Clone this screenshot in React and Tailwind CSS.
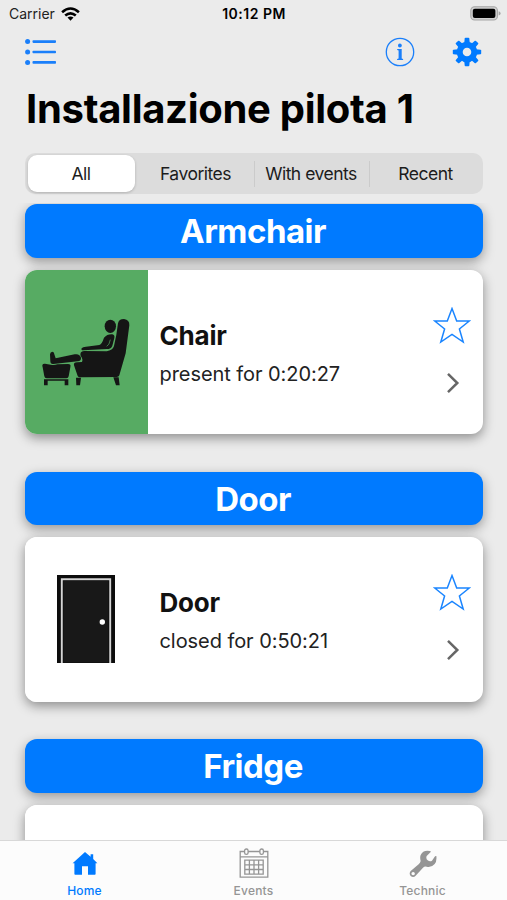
import React, { useState } from 'react';

const filters = ['All', 'Favorites', 'With events', 'Recent'];

const ListIcon = () => (
  <svg width="32" height="26" viewBox="0 0 32 26" fill="#1a7ffa">
    {[2.6, 13, 23.4].map((y) => (
      <g key={y}>
        <circle cx="2.6" cy={y} r="2.5" />
        <rect x="7.5" y={y - 1.3} width="23.5" height="2.6" rx="0.8" />
      </g>
    ))}
  </svg>
);

const InfoIcon = () => (
  <svg width="30" height="30" viewBox="0 0 30 30" fill="#1a7ffa">
    <circle cx="15" cy="15" r="13.7" fill="none" stroke="#1a7ffa" strokeWidth="1.3" />
    <circle cx="14.9" cy="8.5" r="1.9" />
    <path d="M12.2 12.1h4.5v9.5l1.4.4v1h-6v-1l1.5-.4v-8.1l-1.4-.4z" />
  </svg>
);

const GearIcon = () => (
  <svg width="30" height="30" viewBox="0 0 30 30" fill="none">
    <circle cx="15" cy="15" r="7.3" stroke="#007aff" strokeWidth="6" />
    {[0, 45, 90, 135, 180, 225, 270, 315].map((angle) => (
      <path
        key={angle}
        d="M12.2 6 12.7 1.5Q12.8.8 13.5.8h3q.7 0 .8.7L17.8 6z"
        fill="#007aff"
        transform={`rotate(${angle} 15 15)`}
      />
    ))}
  </svg>
);

const WifiIcon = () => (
  <svg width="19" height="14" viewBox="0 0 19 14" fill="none" stroke="#000" strokeWidth="2.6">
    <path d="M1.1 5.2Q9.5-2.2 17.9 5.2" />
    <path d="M4.2 8.6Q9.5 4 14.8 8.6" />
    <path d="M9.5 13.7 6.5 10.6Q9.5 8.2 12.5 10.6z" fill="#000" stroke="none" />
  </svg>
);

const BatteryIcon = () => (
  <svg width="31" height="15" viewBox="0 0 31 15">
    <rect x="0.8" y="0.8" width="26.6" height="13.2" rx="3.8" fill="#d0d0d0" stroke="#a5a5a5" strokeWidth="1.1" />
    <rect x="2.8" y="2.8" width="22.6" height="9.2" rx="2" fill="#000" />
    <path d="M28.6 5.2q2 .6 2 2.2t-2 2.2z" fill="#a5a5a5" />
  </svg>
);

const ArmchairIcon = () => (
  <svg width="90" height="68" viewBox="65 54 270 204" fill="#151515">
    <ellipse cx="273" cy="79" rx="17" ry="20" />
    <path d="M296 70Q298 57 314 57Q331 59 330 76L319 160 300 226Q298 232 290 231L184 232Q175 232 174 225L164 196Q162 187 173 187L188 186Q192 178 184 168Q180 155 194 153L262 154Q280 151 284 138Q292 105 296 70Z" />
    <path d="M254 113Q264 102 279 103Q287 105 285 114L279 137Q276 147 262 147L192 151Q184 151 187 145Q190 141 200 140L240 135Q248 132 254 113Z" />
    <path d="M262 139Q270 136 273 119" fill="none" stroke="#57ab63" strokeWidth="2" />
    <path d="M92 163Q93 155 99 155Q105 156 105 163L109 175 166 163Q181 160 185 173Q186 183 175 184L102 192Q93 193 93 183Z" />
    <path d="M70 202Q66 190 77 191L94 194Q104 197 114 193L146 192Q156 192 153 202L148 229Q147 235 141 235H82Q76 235 75 229Z" />
    <path d="M74 238H147V256H136V242H85V256H74Z" />
    <path d="M170 233H185L182 256H171ZM282 232H298L301 256H290Z" />
  </svg>
);

const DoorIcon = () => (
  <svg width="58" height="88" viewBox="0 0 58 88">
    <rect width="58" height="88" fill="#0c0c0c" />
    <path d="M4.8 88V4.2H53.2V88" fill="none" stroke="#d4d4d4" strokeWidth="1.9" />
    <rect x="6.5" y="5.8" width="45" height="81.7" fill="#181818" />
    <circle cx="45.3" cy="47" r="2.7" fill="#fff" />
  </svg>
);

const StarIcon = () => (
  <svg width="38" height="37" viewBox="0 0 38 37" fill="none" stroke="#1a85ff" strokeWidth="1.5">
    <path d="M19 1.6 23.7 14H36.3L26.4 22 30.2 35 19 27.5 7.8 35 11.6 22 1.7 14H14.3Z" />
  </svg>
);

const ChevronIcon = () => (
  <svg width="14" height="22" viewBox="0 0 14 22" fill="none" stroke="#666" strokeWidth="2.5">
    <path d="M2 1.8 11.3 11 2 20.2" />
  </svg>
);

const HomeIcon = () => (
  <svg width="26" height="25" viewBox="0 0 26 25" fill="#007aff">
    <path d="M13 .9 18.6 5.7V3.2H21.2V8.1L25.4 12.2H23.6V23Q23.6 23.8 22.8 23.8H16V15.2H10V23.8H3.2Q2.4 23.8 2.4 23V12.2H.6Z" />
  </svg>
);

const CalendarIcon = () => (
  <svg width="30" height="31" viewBox="0 0 30 31" fill="none" stroke="#959595" strokeWidth="1.3">
    <path d="M5.6 3.5H1.2V29.2H28.8V3.5H24.4M9.1 3.5H20.9M1.2 8.9H28.8" />
    <rect x="5.6" y="1" width="3.5" height="5.4" rx="1.7" />
    <rect x="20.9" y="1" width="3.5" height="5.4" rx="1.7" />
    <path d="M5.8 12.2H24.2V26.2H5.8ZM5.8 16.9H24.2M5.8 21.5H24.2M10.4 12.2V26.2M15 12.2V26.2M19.6 12.2V26.2" />
  </svg>
);

const WrenchIcon = () => (
  <svg width="28" height="28" viewBox="0 0 84 84" fill="#959595">
    <path
      fillRule="evenodd"
      d="M63 3Q42-1 35 15Q32 23 35 33Q34 38 29 43L5 63Q-1 71 5 78Q13 85 20 77L42 53Q47 48 53 50Q68 53 77 42Q84 34 82 18Q79 17 77 20L69 32Q63 36 56 31Q50 26 53 18L65 6Q66 3 63 3ZM12.5 66A5 5 0 1 1 12.4 66Z"
    />
  </svg>
);

const devices = [
  {
    group: 'Armchair',
    name: 'Chair',
    status: 'present for 0:20:27',
    icon: <ArmchairIcon />,
    tile: 'bg-[#57ab63]',
  },
  {
    group: 'Door',
    name: 'Door',
    status: 'closed for 0:50:21',
    icon: <DoorIcon />,
    tile: 'bg-white',
  },
  { group: 'Fridge', name: '', status: '', icon: null, tile: 'bg-white' },
];

const tabs = [
  { label: 'Home', icon: <HomeIcon /> },
  { label: 'Events', icon: <CalendarIcon /> },
  { label: 'Technic', icon: <WrenchIcon /> },
];

const DeviceSection = ({ device }) => (
  <section className="h-[267.5px] shrink-0">
    <h2 className="h-[53.5px] rounded-xl bg-[#007aff] pr-0.5 text-center text-[33px] leading-[54px] font-bold tracking-[-0.5px] text-white shadow-[0_4px_12px_rgba(0,0,0,0.36)]">
      {device.group}
    </h2>
    <div className="mt-3 flex h-[164.5px] rounded-xl bg-white shadow-[0_4px_12px_rgba(0,0,0,0.4)]">
      <div className={`flex w-[122.5px] shrink-0 items-center justify-center rounded-l-xl ${device.tile}`}>
        {device.icon}
      </div>
      {device.name && (
        <>
          <div className="flex-1 pt-[50px] pl-3">
            <h3 className="text-[26px] leading-8 font-bold tracking-[-0.2px] text-[#111]">{device.name}</h3>
            <p className="mt-2 text-[20px] leading-7 tracking-[-0.06px] text-[#222]">{device.status}</p>
          </div>
          <div className="flex w-[62px] flex-col items-center pt-[37px]">
            <button aria-label="Add to favorites"><StarIcon /></button>
            <button aria-label="Open details" className="mt-7 pl-px"><ChevronIcon /></button>
          </div>
        </>
      )}
    </div>
  </section>
);

const App = () => {
  const [filter, setFilter] = useState('All');
  const [tab, setTab] = useState('Home');

  return (
    <div className="flex h-[900px] w-[507px] flex-col overflow-hidden bg-[#ebebeb] font-[Inter,sans-serif]">
      {/* Status bar */}
      <div className="grid h-[27px] shrink-0 grid-cols-3 items-center pr-1.5 pl-[9px] text-[14px] text-[#222]">
        <div className="flex items-center gap-1.5">
          <span>Carrier</span>
          <WifiIcon />
        </div>
        <span className="pr-0.5 text-center font-semibold tracking-[0.5px] text-black">10:12 PM</span>
        <div className="flex justify-end"><BatteryIcon /></div>
      </div>

      <header className="shrink-0 px-[25px] pt-px">
        <div className="flex h-12 items-center">
          <button aria-label="Menu"><ListIcon /></button>
          <div className="ml-auto flex gap-[37px]">
            <button aria-label="Info"><InfoIcon /></button>
            <button aria-label="Settings"><GearIcon /></button>
          </div>
        </div>
        <h1 className="h-[77px] pt-[9px] pl-px text-[40px] leading-[48px] font-bold tracking-[-0.3px] whitespace-nowrap text-black">
          Installazione pilota 1
        </h1>
      </header>

      {/* Filter */}
      <div className="mr-6 ml-[25px] grid h-[41px] shrink-0 grid-cols-4 items-center rounded-[10px] bg-[#dcdcdc]">
        {filters.map((label, i) => (
          <div key={label} className={`h-[26px] ${i > 1 ? 'border-l border-[#cbcbcb]' : ''}`}>
            <button
              onClick={() => setFilter(label)}
              className={`-mt-[5.5px] ml-[2.5px] h-[37px] w-[107px] rounded-[9px] pt-px text-[17.5px] tracking-[-0.5px] whitespace-nowrap text-[#1c1c1c] ${
                filter === label ? 'bg-white shadow-[0_1px_3px_rgba(0,0,0,0.2)]' : ''
              }`}
            >
              {label}
            </button>
          </div>
        ))}
      </div>

      {/* Devices */}
      <main className="mt-[9px] min-h-0 flex-1 overflow-hidden pt-px pr-6 pl-[25px]">
        {devices.map((device) => (
          <DeviceSection key={device.group} device={device} />
        ))}
      </main>

      {/* Tab bar */}
      <nav className="grid h-[60px] shrink-0 grid-cols-3 border-t border-[#d8d8d8] bg-[#fcfcfc]">
        {tabs.map(({ label, icon }) => (
          <button
            key={label}
            onClick={() => setTab(label)}
            className={`flex flex-col items-center pt-[7px] text-[12px] leading-4 font-medium ${
              tab === label ? 'text-[#007aff]' : 'text-[#959595]'
            }`}
          >
            <span className="mb-1 flex h-[31px] items-center">{icon}</span>
            <span className="tracking-[0.2px]">{label}</span>
          </button>
        ))}
      </nav>
    </div>
  );
};

export default App;
